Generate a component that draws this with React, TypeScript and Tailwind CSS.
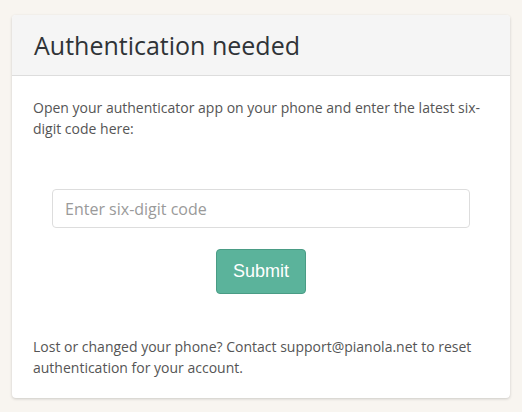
export default function App() {
  return (
    <div className="min-h-[412px] w-full bg-[#f8f5f0] pt-[15px] px-[12px]" style={{ fontFamily: '"Open Sans", sans-serif' }}>
      <div className="w-[498px] rounded-[4px] bg-white shadow-[0_1px_3px_rgba(0,0,0,0.18)] overflow-hidden">
        <div className="bg-[#f5f5f5] border-b border-[#dddddd] px-[22px] py-[15px]">
          <h1 className="text-[25px] leading-[30px] text-[#2f3337]">Authentication needed</h1>
        </div>
        <div className="px-[21px] pt-[21px] pb-[20px] text-[14px] leading-[21px] text-[#555555]">
          <p>Open your authenticator app on your phone and enter the latest six-digit code here:</p>
          <form className="flex flex-col items-center mt-[50px]" onSubmit={e => e.preventDefault()}>
            <input
              type="text"
              placeholder="Enter six-digit code"
              className="w-[418px] h-[39px] rounded-[4px] border border-[#dddddd] px-[12px] text-[16px] text-[#555555] placeholder:text-[#9a9a9a] outline-none"
            />
            <button
              type="submit"
              className="mt-[21px] w-[90px] h-[45px] rounded-[4px] bg-[#5bb39b] border border-[#4a9c85] text-white text-[18px]"
              style={{ fontFamily: '"Liberation Sans", Arial, sans-serif' }}
            >
              Submit
            </button>
          </form>
          <p className="mt-[42px]">Lost or changed your phone? Contact support@pianola.net to reset authentication for your account.</p>
        </div>
      </div>
    </div>
  );
}
